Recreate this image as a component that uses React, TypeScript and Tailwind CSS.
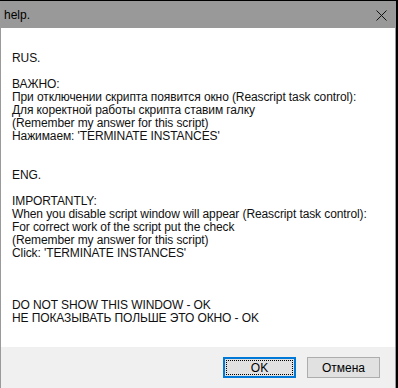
import React from 'react'

const lines = [
  'RUS.',
  '',
  'ВАЖНО:',
  'При отключении скрипта появится окно (Reascript task control):',
  'Для коректной работы скрипта ставим галку',
  '(Remember my answer for this script)',
  "Нажимаем: 'TERMINATE INSTANCES'",
  '',
  '',
  'ENG.',
  '',
  'IMPORTANTLY:',
  'When you disable script window will appear (Reascript task control):',
  'For correct work of the script put the check',
  '(Remember my answer for this script)',
  "Click: 'TERMINATE INSTANCES'",
  '',
  '',
  '',
  'DO NOT SHOW THIS WINDOW - OK',
  'НЕ ПОКАЗЫВАТЬ ПОЛЬШЕ ЭТО ОКНО - OK',
]

export default function App() {
  return (
    <div
      className="w-[398px] h-[388px] bg-black pt-px overflow-hidden"
      style={{ fontFamily: '"Liberation Sans", Arial, sans-serif' }}
    >
      <div className="w-[396px] h-[387px] flex flex-col bg-white border-x border-[#9a9a9a]">
        {/* title bar */}
        <div className="h-[27px] shrink-0 bg-[#999999] flex items-center justify-between pl-[3px] pr-[8px]">
          <span className="text-[12px] text-black">help.</span>
          <svg width="11" height="11" viewBox="0 0 11 11" className="mt-[1px]">
            <path d="M0.5 0.5L10.5 10.5M10.5 0.5L0.5 10.5" stroke="#111" strokeWidth="1" fill="none" />
          </svg>
        </div>

        {/* message */}
        <div className="flex-1 pt-[24px] pl-[11px] text-[12px] leading-[13px] tracking-[-0.1px] text-[#111]">
          {lines.map((line, i) => (
            <div key={i} className="h-[13px] whitespace-pre">
              {line}
            </div>
          ))}
        </div>

        {/* buttons */}
        <div className="h-[41px] shrink-0 bg-[#f0f0f0] flex justify-end items-start pt-[10px] pr-[15px] gap-[11px]">
          <button className="w-[73px] h-[21px] bg-[#e1e1e1] border-2 border-[#0078d7] p-px">
            <span className="flex items-center justify-center w-full h-full border border-dotted border-black text-[12px] text-black">
              OK
            </span>
          </button>
          <button className="w-[73px] h-[21px] bg-[#e1e1e1] border border-[#adadad] flex items-center justify-center text-[12px] text-black">
            Отмена
          </button>
        </div>
      </div>
    </div>
  )
}
